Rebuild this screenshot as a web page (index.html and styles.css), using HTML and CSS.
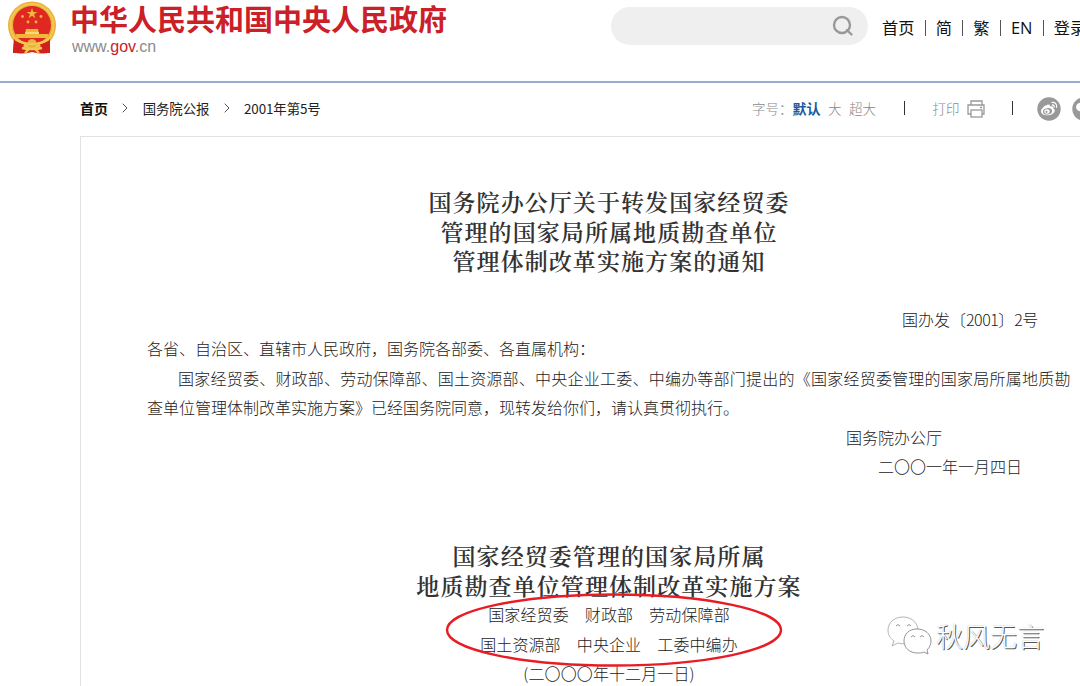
FILE: index.html
```html
<!DOCTYPE html>
<html lang="zh-CN">
<head>
    <meta charset="utf-8">
    <title>国务院公报 2001年第5号</title>
    <link rel="stylesheet" href="styles.css">
</head>
<body>
    <div class="header">
        <svg class="emblem" width="48" height="54" viewBox="0 0 48 54">
            <path d="M6 38 L5 51 Q13 54 24 51 Q36 54 42 51 L42 38 Z" fill="#d2201f"/>
            <circle cx="24" cy="24.5" r="24" fill="#e9b23c"/>
            <circle cx="24" cy="24.5" r="21.5" fill="none" stroke="#f3c850" stroke-width="2"/>
            <circle cx="24" cy="24" r="19" fill="#df2821"/>
            <path d="M24 7l1.3 3.9h4.1l-3.3 2.4 1.2 3.9-3.3-2.4-3.3 2.4 1.2-3.9-3.3-2.4h4.1z" fill="#efb83c"/>
            <g fill="#efb83c">
                <circle cx="14.5" cy="15.5" r="1.4"/>
                <circle cx="33" cy="15.5" r="1.4"/>
                <circle cx="20" cy="21" r="1.4"/>
                <circle cx="28" cy="21" r="1.4"/>
                <path d="M18 28h12l1 5h9v4H8v-4h9z"/>
            </g>
            <path d="M17 32h14" stroke="#fae28a" stroke-width="1.5"/>
            <path d="M6 38l10 5-2 9H5zM42 38l-10 5 2 9h8z" fill="#d2201f"/>
            <circle cx="24" cy="42.5" r="4.5" fill="#e9b23c"/>
            <path d="M7 38q7 5 17 5t17-5M14 47l5 1h10l5-1M17 52l4-4h6l4 4" fill="none" stroke="#f3c850" stroke-width="2.3"/>
        </svg>
        <div class="brand">
            <div class="brand-name">中华人民共和国中央人民政府</div>
            <div class="brand-url">www.<span>gov</span>.cn</div>
        </div>
        <div class="search">
            <svg width="22" height="22" viewBox="0 0 22 22" fill="none" stroke="#999" stroke-width="2.4">
                <circle cx="10" cy="10" r="8"/>
                <path d="M15 15l4.5 4.5" stroke-linecap="round"/>
            </svg>
        </div>
        <div class="nav">
            <a>首页</a><i></i><a>简</a><i></i><a>繁</a><i></i><a class="en">EN</a><i></i><a>登录</a>
        </div>
    </div>

    <div class="toolbar">
        <div class="crumbs">
            <b>首页</b>
            <svg width="6" height="10" viewBox="0 0 6 10"><path d="M.7.7 5 5 .7 9.3" fill="none" stroke="#555"/></svg>
            <span>国务院公报</span>
            <svg width="6" height="10" viewBox="0 0 6 10"><path d="M.7.7 5 5 .7 9.3" fill="none" stroke="#555"/></svg>
            <span>2001年第5号</span>
        </div>
        <div class="tools">
            <span>字号：</span><b>默认</b><span class="size">大</span><span class="size">超大</span>
            <i></i>
            <span>打印</span>
            <svg class="printer" width="18" height="18" viewBox="0 0 18 18" fill="none" stroke="#999" stroke-width="1.3">
                <path d="M4 5V1h11v4M4 14H1V5h16v9h-2"/>
                <rect x="4" y="10" width="11" height="7"/>
                <path d="M13 7.5h2"/>
            </svg>
            <i></i>
            <svg class="share" width="24" height="24" viewBox="0 0 24 24">
                <circle cx="12" cy="12" r="11.7" fill="#999"/>
                <path d="M10 8c2-1 3.5 0 3 1.6 2.5-.8 4 .2 3.3 1.9 3 1.2 1.5 6.500-5.300 6.800-4.500.2-7-1.800-7-4.100C4 12 7.500 8.500 10 8z" fill="#fff"/>
                <ellipse cx="10.5" cy="14.3" rx="4.6" ry="3.2" fill="#999" transform="rotate(-8 10.5 14.3)"/>
                <ellipse cx="10" cy="14.5" rx="2.7" ry="2.2" fill="#fff"/>
                <circle cx="9.5" cy="14.8" r="1.1" fill="#999"/>
                <path d="M14.5 5.5c3.6-.8 6 2 5 5.300M14.800 8c1.700-.4 2.900.9 2.400 2.400" fill="none" stroke="#fff" stroke-width="1.2"/>
            </svg>
            <svg class="share" width="24" height="24" viewBox="0 0 24 24">
                <circle cx="12" cy="12" r="11.7" fill="#999"/>
                <ellipse cx="9.5" cy="10" rx="5.5" ry="4.5" fill="#fff"/>
            </svg>
        </div>
    </div>

    <div class="article">
        <h1>国务院办公厅关于转发国家经贸委<br>管理的国家局所属地质勘查单位<br>管理体制改革实施方案的通知</h1>
        <p class="doc-no">国办发〔<span>2001</span>〕<span>2</span>号</p>
        <p>各省、自治区、直辖市人民政府，国务院各部委、各直属机构：</p>
        <p class="wide">国家经贸委、财政部、劳动保障部、国土资源部、中央企业工委、中编办等部门提出的《国家经贸委管理的国家局所属地质勘</p>
        <p>查单位管理体制改革实施方案》已经国务院同意，现转发给你们，请认真贯彻执行。</p>
        <p class="sign">国务院办公厅</p>
        <p class="date">二〇〇一年一月四日</p>
        <h2>国家经贸委管理的国家局所属<br>地质勘查单位管理体制改革实施方案</h2>
        <div class="issuers">
            <p>国家经贸委　财政部　劳动保障部</p>
            <p>国土资源部　中央企业　工委中编办</p>
            <svg class="mark" width="340" height="76" viewBox="0 0 340 76">
                <ellipse cx="170" cy="38" rx="167" ry="35.5" fill="none" stroke="#e81c24" stroke-width="2.4"/>
            </svg>
        </div>
        <p class="center">(二〇〇〇年十二月一日)</p>
    </div>

    <div class="watermark">
        <svg width="46" height="42" viewBox="0 0 46 42" fill="#fff" stroke="#888" stroke-width=".9">
            <path d="M17 2C8 2 2 8 2 15c0 5 2 8 6 11l-2 5 6-3c3 1 6 1 9 0 8-1 12-7 11-14C31 7 25 2 17 2z" stroke="#aaa"/>
            <path d="M31 14c-8 0-13 5-13 12s6 12 13 12c3 0 5 0 7-1l4 2-1-4c3-3 4-6 4-9 0-7-6-12-14-12z"/>
            <path d="M10 11q2-3 4 0M21 11q2-3 4 0M25 22q2-3 4 0M34 22q2-3 4 0" fill="none"/>
        </svg>
        <span>秋风无言</span>
    </div>
</body>
</html>
```

FILE: styles.css
```css
* {
    box-sizing: border-box;
}

body {
    margin: 0;
    height: 686px;
    position: relative;
    overflow: hidden;
    background: #fff;
    font-family: "Noto Sans CJK SC", sans-serif;
    color: #333;
}

a, i, b, span, p {
    white-space: nowrap;
}

/* header */
.header {
    display: flex;
    align-items: flex-start;
    height: 83px;
    padding-left: 8px;
    border-bottom: 2px solid #94aecb;
}

.emblem {
    flex: none;
    margin-top: 1px;
}

.brand {
    flex: none;
    width: 541px;
    margin-left: 14px;
}

.brand-name {
    height: 38px;
    line-height: 37px;
    font-size: 29px;
    font-weight: bold;
    color: #cb2027;
    white-space: nowrap;
}

.brand-url {
    padding-left: 2px;
    font: 16px/18px "Liberation Sans", sans-serif;
    color: #8b8b8b;
}

.brand-url span {
    color: #cb2027;
}

.search {
    flex: none;
    display: flex;
    justify-content: flex-end;
    align-items: center;
    width: 257px;
    height: 38px;
    margin-top: 7px;
    padding-right: 14px;
    border-radius: 19px;
    background: #efefef;
}

.nav {
    flex: none;
    display: flex;
    align-items: center;
    gap: 10.2px;
    margin: 15px 0 0 14px;
    font-size: 16.2px;
    line-height: 25px;
    color: #111;
}

.nav .en {
    font-family: "Open Sans", sans-serif;
    font-size: 16.5px;
}

.nav i {
    width: 1px;
    height: 16px;
    background: #555;
}

/* breadcrumb and tools */
.toolbar {
    display: flex;
    height: 53px;
    padding: 0 0 3px 80px;
    font-size: 13.5px;
}

.crumbs {
    display: flex;
    align-items: center;
    gap: 14.4px;
    flex: none;
    width: 672px;
    color: #222;
}

.crumbs span {
    font-size: 13.4px;
    letter-spacing: -0.1px;
}

.crumbs b {
    font-size: 14px;
    color: #111;
}

.tools {
    display: flex;
    align-items: center;
    flex: none;
    color: #888;
    font-weight: 300;
}

.tools b {
    color: #1a5a9e;
    font-size: 14px;
    font-weight: bold;
}

.tools .size {
    margin-left: 7.5px;
}

.tools i {
    width: 1px;
    height: 14px;
    margin: 0 27.5px 0 28px;
    background: #333;
}

.tools .printer {
    margin: 2px 0 0 7px;
}

.tools .printer + i {
    margin-left: 27px;
}

.tools .share {
    margin: 2px 14px 0 -3px;
}

/* document */
.article {
    width: 1000px;
    height: 550px;
    margin-left: 80px;
    padding: 50px 0 0 66px;
    border: 1px solid #e2e2e2;
    border-width: 1px 0 0 1px;
    font-size: 16px;
    line-height: 29.55px;
}

.article p {
    height: 29.55px;
    margin: 0;
    color: #222;
    font-weight: 300;
}

.article h1,
.article h2 {
    width: 924px;
    margin: 0;
    font-family: "Noto Serif CJK SC", "Noto Sans CJK SC", sans-serif;
    font-size: 23px;
    font-weight: 600;
    letter-spacing: 1.08px;
    line-height: 29.55px;
    text-align: center;
}

.article .doc-no {
    margin: 29px 0 0 755px;
}

.doc-no span {
    letter-spacing: -0.5px;
}

.article .wide {
    padding-left: 31px;
    letter-spacing: 0.23px;
}

.article .sign {
    margin-left: 699px;
}

.article .date {
    margin-left: 731px;
}

.article h2 {
    margin-top: 59.1px;
}

.issuers {
    position: relative;
}

.issuers p,
.center {
    width: 924px;
    letter-spacing: 0.1px;
    text-align: center;
}

.mark {
    position: absolute;
    left: 297px;
    top: -8px;
}

.watermark {
    position: absolute;
    left: 886px;
    top: 615px;
    display: flex;
    gap: 4px;
    align-items: center;
}

.watermark span {
    font-size: 27px;
    font-weight: 300;
    line-height: 42px;
    color: #fff;
    text-shadow: 1px 1px 0 #555, 0 0 1px #aaa;
}
```
